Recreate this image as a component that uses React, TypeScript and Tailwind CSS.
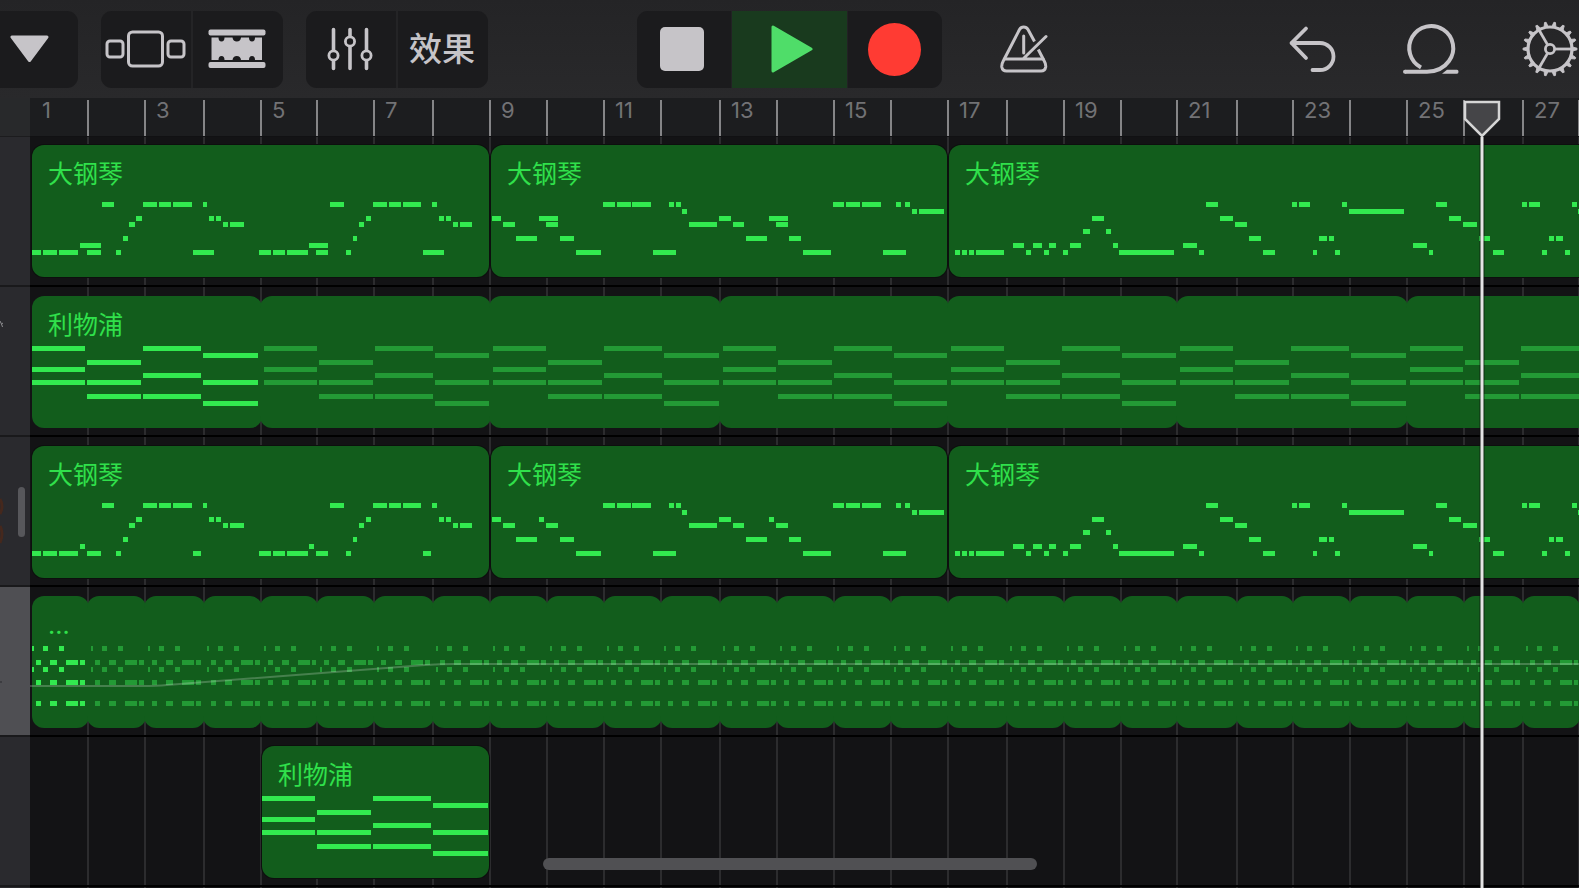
import type { ReactNode } from 'react';

// [pitch row, start, end], px from the left edge of the region
type Note = [number, number, number];
interface Region { name: string; bars: number; notes: Note[]; loops?: number; offset?: number }
interface Track { id: string; regions: Region[]; selected?: boolean; automation?: boolean }

const BAR_WIDTHS = [
  57, 57, 59, 57, 56, 57, 59, 57, 57, 57, 57, 59, 57, 57,
  57, 57, 59, 57, 57, 56, 60, 56, 57, 57, 57, 59, 56, 57,
];
const ROW_TOPS = [50, 57, 64, 71, 77, 84, 91, 98, 105];

const span = (from: number, count: number) => BAR_WIDTHS.slice(from, from + count).reduce((a, b) => a + b, 0);

const PIANO_A_COMMON: Note[] = [
  [1, 70, 82], [1, 111, 125], [1, 127, 139], [1, 141, 160], [1, 171, 175], [1, 298, 312], [1, 341, 355], [1, 357, 369], [1, 371, 389], [1, 400, 405],
  [3, 104, 110], [3, 177, 182], [3, 184, 189], [3, 334, 339], [3, 407, 412], [3, 414, 419],
  [4, 97, 103], [4, 191, 196], [4, 198, 212], [4, 327, 332], [4, 421, 426], [4, 428, 440],
  [6, 91, 96], [6, 321, 325],
  [8, 0, 9], [8, 11, 25], [8, 27, 46], [8, 55, 69], [8, 84, 89], [8, 227, 239], [8, 241, 253], [8, 255, 276], [8, 284, 296], [8, 314, 319],
];
const PIANO_A: Note[] = [...PIANO_A_COMMON, [7, 48, 69], [7, 277, 296], [8, 161, 182], [8, 391, 412]];
const PIANO_A_SHORT: Note[] = [...PIANO_A_COMMON, [7, 48, 53], [7, 277, 282], [8, 161, 169], [8, 391, 399]];

const PIANO_B_COMMON: Note[] = [
  [1, 112, 124], [1, 126, 140], [1, 141, 160], [1, 178, 183], [1, 185, 190], [1, 342, 353], [1, 355, 369], [1, 371, 390], [1, 405, 410], [1, 414, 419],
  [2, 191, 196], [2, 421, 426], [2, 428, 453],
  [3, 1, 10], [3, 228, 240],
  [4, 12, 24], [4, 55, 67], [4, 198, 226], [4, 242, 253], [4, 285, 297],
  [6, 25, 46], [6, 69, 83], [6, 255, 276], [6, 298, 310],
  [8, 85, 110], [8, 162, 185], [8, 312, 340], [8, 392, 415],
];
const PIANO_B: Note[] = [...PIANO_B_COMMON, [3, 48, 67], [3, 278, 297]];
const PIANO_B_SHORT: Note[] = [...PIANO_B_COMMON, [3, 48, 53], [3, 278, 283]];

const PIANO_C: Note[] = [
  [1, 257, 269], [1, 343, 348], [1, 350, 361], [1, 393, 398], [1, 487, 498], [1, 573, 578], [1, 580, 591], [1, 623, 628],
  [2, 400, 455], [2, 629, 684],
  [3, 143, 155], [3, 271, 284], [3, 500, 512],
  [4, 286, 298], [4, 514, 528],
  [5, 134, 141], [5, 157, 162],
  [6, 300, 312], [6, 370, 378], [6, 380, 385], [6, 530, 541], [6, 600, 605], [6, 607, 614],
  [7, 64, 75], [7, 84, 93], [7, 100, 107], [7, 121, 132], [7, 164, 169], [7, 234, 248], [7, 464, 478],
  [8, 6, 11], [8, 13, 18], [8, 20, 25], [8, 27, 55], [8, 77, 82], [8, 95, 100], [8, 114, 119], [8, 170, 225], [8, 250, 255],
  [8, 314, 326], [8, 364, 368], [8, 386, 391], [8, 480, 484], [8, 544, 555], [8, 593, 598], [8, 616, 621],
];

const CHORDS: Note[] = [
  [0, 0, 53], [3, 0, 53], [5, 0, 53],
  [2, 55, 109], [5, 55, 109], [7, 55, 109],
  [0, 111, 169], [4, 111, 169], [7, 111, 169],
  [1, 171, 226], [5, 171, 226], [8, 171, 226],
];

const DRUMS: Note[] = [
  ...[0, 3].flatMap((r): Note[] => [[r, 0, 2], [r, 11, 16], [r, 27, 32]]),
  ...[2, 5, 8].flatMap((r): Note[] => [[r, 4, 9], [r, 18, 25], [r, 34, 46], [r, 48, 53]]),
];

const TRACKS: Track[] = [
  {
    id: 'piano-1',
    regions: [
      { name: '大钢琴', bars: 8, notes: PIANO_A },
      { name: '大钢琴', bars: 8, notes: PIANO_B },
      { name: '大钢琴', bars: 12, notes: PIANO_C },
    ],
  },
  { id: 'liverpool-1', regions: [{ name: '利物浦', bars: 4, loops: 7, notes: CHORDS }] },
  {
    id: 'piano-2',
    regions: [
      { name: '大钢琴', bars: 8, notes: PIANO_A_SHORT },
      { name: '大钢琴', bars: 8, notes: PIANO_B_SHORT },
      { name: '大钢琴', bars: 12, notes: PIANO_C },
    ],
  },
  { id: 'drums', selected: true, automation: true, regions: [{ name: '...', bars: 1, loops: 28, notes: DRUMS }] },
  { id: 'liverpool-2', regions: [{ name: '利物浦', bars: 4, offset: 4, notes: CHORDS }] },
];

export default function App() {
  return (
    <div className="relative flex h-screen flex-col overflow-hidden bg-[#131315] font-['Inter','Noto_Sans_CJK_SC',sans-serif] select-none">
      <Toolbar />
      <main className="flex min-h-0 flex-1">
        <TrackHeaders />
        <Timeline />
      </main>
      <div className="absolute bottom-[18px] left-1/2 h-3 w-[494px] -translate-x-1/2 rounded-full bg-[#505053]" />
    </div>
  );
}

function Toolbar() {
  return (
    <header className="grid h-[98px] shrink-0 grid-cols-[1fr_auto_1fr] items-center bg-linear-to-b from-[#242426] to-[#29292b] text-[#c6c4c8]">
      <div className="flex gap-[23px]">
        <button aria-label="菜单" className="flex h-[77px] w-[78px] items-center rounded-r-[11px] bg-[#1b1b1d] pl-[10px]">
          <svg width="39" height="28" viewBox="0 0 39 28" fill="currentColor" stroke="currentColor" strokeWidth="3" strokeLinejoin="round">
            <path d="M2 2H37L19.5 25.5Z" />
          </svg>
        </button>
        <Group>
          <ToolButton label="音源"><BrowserIcon /></ToolButton>
          <ToolButton label="轨道"><TracksIcon /></ToolButton>
        </Group>
        <Group>
          <ToolButton label="混音"><SlidersIcon /></ToolButton>
          <ToolButton label="效果"><span className="text-[33px] leading-none font-medium">效果</span></ToolButton>
        </Group>
      </div>

      <div className="flex h-[77px] gap-px overflow-hidden rounded-[11px] bg-[#222224]">
        <button aria-label="停止" className="flex w-[94px] items-center justify-center bg-[#1b1b1d] pr-1">
          <span className="size-11 rounded-[5px] bg-[#c6c4c8]" />
        </button>
        <button aria-label="播放" className="flex w-[115px] items-center justify-center bg-[#193a1e] pl-1">
          <svg width="42" height="48" viewBox="0 0 42 48" fill="#4fdd69" stroke="#4fdd69" strokeWidth="3" strokeLinejoin="round">
            <path d="M2 2V46L40 24Z" />
          </svg>
        </button>
        <button aria-label="录音" className="flex w-[94px] items-center justify-center bg-[#1b1b1d] pr-[2px]">
          <span className="size-[53px] rounded-full bg-[#ff3b33]" />
        </button>
      </div>

      <div className="flex items-center justify-between pr-px pl-[54px]">
        <button aria-label="节拍器"><MetronomeIcon /></button>
        <div className="flex gap-[63px]">
          <button aria-label="撤销"><UndoIcon /></button>
          <button aria-label="循环"><LoopIcon /></button>
          <button aria-label="设置"><GearIcon /></button>
        </div>
      </div>
    </header>
  );
}

function Group({ children }: { children: ReactNode }) {
  return <div className="flex h-[77px] gap-[2px] overflow-hidden rounded-[11px] bg-[#242426]">{children}</div>;
}

function ToolButton({ label, children }: { label: string; children: ReactNode }) {
  return <button aria-label={label} className="flex w-[90px] items-center justify-center bg-[#1b1b1d] pr-[2px]">{children}</button>;
}

function TrackHeaders() {
  return (
    <aside className="relative w-[30px] shrink-0 overflow-hidden bg-[#2a2a2e]">
      <div className="h-[39px] border-b border-[#1c1c1e] bg-[#28292b]" />
      {TRACKS.map((t) => (
        <div key={t.id} className={`h-[150px] border-b-2 border-[#19191b] ${t.selected ? 'bg-[#4f4f53]' : 'bg-[#2a2a2e]'}`} />
      ))}
      {/* instrument pictures poking out from the collapsed panel */}
      <svg className="absolute top-0 left-0" width="6" height="620" viewBox="0 0 6 620" fill="none">
        <path d="M0 223L1.500 226L3 225M1.500 226L2.500 229" stroke="#8f8f92" strokeWidth="1" />
        <path d="M0 401Q4 408 0 416M0 428Q4 435 0 445" stroke="#45281d" strokeWidth="3" />
        <path d="M0 584H2" stroke="#2a2a2e" strokeWidth="1" />
      </svg>
      <div className="absolute top-[389px] left-[18px] h-[50px] w-[7px] rounded-full bg-[#57575b]" />
    </aside>
  );
}

function Timeline() {
  return (
    <section className="relative min-w-0 flex-1 overflow-hidden">
      {/* bar lines */}
      <div className="absolute inset-0 flex">
        {BAR_WIDTHS.map((w, i) => (
          <div key={i} style={{ width: w }} className="shrink-0 border-l-2 border-[#2c2c2e] first:border-transparent" />
        ))}
      </div>

      <div className="relative flex h-[39px] border-b border-[#111113] bg-[#1c1d1f] pt-[2px]">
        {BAR_WIDTHS.map((w, i) => (
          <div key={i} style={{ width: w }} className="shrink-0 border-l-2 border-[#858587] pl-[10px] text-[22px] leading-5 text-[#727275] first:border-transparent">
            {i % 2 === 0 && i + 1}
          </div>
        ))}
      </div>

      {TRACKS.map((t) => <Lane key={t.id} track={t} />)}

      <svg className="absolute top-px left-[1432px]" width="40" height="800" viewBox="0 0 40 800">
        <path d="M20 38V800" stroke="#0b0b0c" strokeOpacity="0.6" strokeWidth="5" />
        <path d="M20 38V800" stroke="#e4e4e4" strokeWidth="3" />
        <path d="M3 3H37V20L20 37L3 20Z" fill="#454548" stroke="#d6d6d6" strokeWidth="2.5" />
      </svg>
    </section>
  );
}

function Lane({ track }: { track: Track }) {
  let bar = 0;
  return (
    <div className="relative flex h-[150px] border-b-2 border-black pt-[9px] nth-3:pt-2">
      {track.regions.map((r, i) => {
        const lead = r.offset ?? 0;
        const from = bar + lead;
        bar = from + r.bars * (r.loops ?? 1);
        return <RegionView key={i} region={r} from={from} lead={span(from - lead, lead)} />;
      })}
      {track.automation && (
        <svg className="absolute top-0 left-0" width="1640" height="148" viewBox="0 0 1640 148" fill="none">
          <path d="M0 99H112Q127 99 137 98L395 78Q410 77 425 77H1640" stroke="#fff" strokeOpacity="0.22" strokeWidth="2" />
        </svg>
      )}
    </div>
  );
}

function RegionView({ region, from, lead }: { region: Region; from: number; lead: number }) {
  const loops = region.loops ?? 1;
  return (
    <>
      {lead > 0 && <div style={{ width: lead }} className="shrink-0" />}
      {Array.from({ length: loops }, (_, n) => (
        <div key={n} style={{ width: span(from + n * region.bars, region.bars) }} className={`h-[132px] shrink-0 ${n === 0 ? 'pl-[2px]' : ''}`}>
          <div className={`relative h-full rounded-xl bg-[#125d1c] ${loops > 1 ? '-mr-[2px]' : 'ring-1 ring-[#0d0f0e]'}`}>
            {n === 0 && <div className="pt-4 pl-4 text-[25px] leading-[26px] text-[#30e04b]">{region.name}</div>}
            <Notes notes={region.notes} dim={n > 0} />
          </div>
        </div>
      ))}
    </>
  );
}

function Notes({ notes, dim }: { notes: Note[]; dim: boolean }) {
  return (
    <svg className={`absolute top-0 overflow-visible ${dim ? 'left-1' : 'left-0'}`} width="10" height="132" fill={dim ? '#239a35' : '#32e94f'} shapeRendering="crispEdges">
      {notes.map(([row, x1, x2], i) => <rect key={i} x={x1} y={ROW_TOPS[row]} width={x2 - x1} height="5" />)}
    </svg>
  );
}

function BrowserIcon() {
  return (
    <svg width="81" height="40" viewBox="0 0 81 40" fill="none" stroke="currentColor" strokeWidth="3">
      <rect x="2" y="12" width="16" height="16" rx="3" />
      <rect x="23.5" y="3" width="34" height="34" rx="4" />
      <rect x="63" y="12" width="16" height="16" rx="3" />
    </svg>
  );
}

function TracksIcon() {
  return (
    <svg width="58" height="40" viewBox="0 0 58 40" fill="currentColor">
      <rect x="0.5" y="0.5" width="57" height="6" rx="2" />
      <rect x="0.5" y="33" width="57" height="6" rx="2" />
      <path d="M3.5 8.5H10.5Q10.5 12.5 13.5 12.5T16.5 8.5H24.5Q25 12.5 28.8 12.5T33 8.5H41Q41 12.5 44 12.5T47 8.5H54V31H47Q47 27 44 27T41 31H33Q32.500 27 28.800 27T24.500 31H16.500Q16.500 27 13.500 27T10.500 31H3.500Z" />
    </svg>
  );
}

function SlidersIcon() {
  return (
    <svg width="46" height="44" viewBox="0 0 46 44" fill="none" stroke="currentColor" strokeWidth="3.6" strokeLinecap="round">
      <path d="M6.5 2.5V23M6.5 34V41.5M23 2.5V9M23 20V41.5M39.5 2.5V23M39.5 34V41.5" />
      <g strokeWidth="2.8">
        <circle cx="6.5" cy="28.5" r="4.6" />
        <circle cx="23" cy="14.5" r="4.6" />
        <circle cx="39.5" cy="28.5" r="4.6" />
      </g>
    </svg>
  );
}

function MetronomeIcon() {
  return (
    <svg width="56" height="56" viewBox="0 0 56 56" fill="none" stroke="currentColor" strokeWidth="3" strokeLinecap="round" strokeLinejoin="round">
      <path strokeLinecap="butt" d="M38.5 20.5L32 8.5Q30.5 6 27.7 6T23.5 8.5L7.5 39.5Q5.5 43 5.8 46Q6.5 50 10.5 50H45Q49 50 49.7 46Q50 43 48 39.5L42.3 28.5" />
      <path d="M8.5 38H47M27.7 15V32M28 37L50 15.5" />
    </svg>
  );
}

function UndoIcon() {
  return (
    <svg width="56" height="56" viewBox="0 0 56 56" fill="none" stroke="currentColor" strokeWidth="3.8" strokeLinecap="round" strokeLinejoin="round">
      <path d="M22 7.5L7.5 22L22 37M7.5 22H36A13.5 13.5 0 0 1 36 49H28.5" />
    </svg>
  );
}

function LoopIcon() {
  return (
    <svg width="56" height="56" viewBox="0 0 56 56" fill="none" stroke="currentColor" strokeWidth="4">
      <path d="M18 46.500A22 22 0 1 1 46 40Q38.500 50.500 24 50.800H2" />
      <path d="M39 52.800L44 48.800H54Q55.500 49 55.500 50.800T54 52.800Z" fill="currentColor" stroke="none" />
      <circle cx="2" cy="50.800" r="2" fill="currentColor" stroke="none" />
    </svg>
  );
}

function GearIcon() {
  return (
    <svg width="56" height="56" viewBox="0 0 56 56" fill="none" stroke="currentColor" strokeWidth="3.2">
      <circle cx="28" cy="28" r="22" />
      <circle cx="28" cy="28" r="4.600" strokeWidth="2.800" />
      {[0, 120, 240].map((a) => <path key={a} d="M33 28H50" strokeWidth="2.800" transform={`rotate(${a} 28 28)`} />)}
      {Array.from({ length: 18 }, (_, i) => (
        <path key={i} d="M50.500 26L55 27.200V28.800L50.500 30Z" fill="currentColor" stroke="currentColor" strokeWidth="0.900" transform={`rotate(${i * 20} 28 28)`} />
      ))}
    </svg>
  );
}
